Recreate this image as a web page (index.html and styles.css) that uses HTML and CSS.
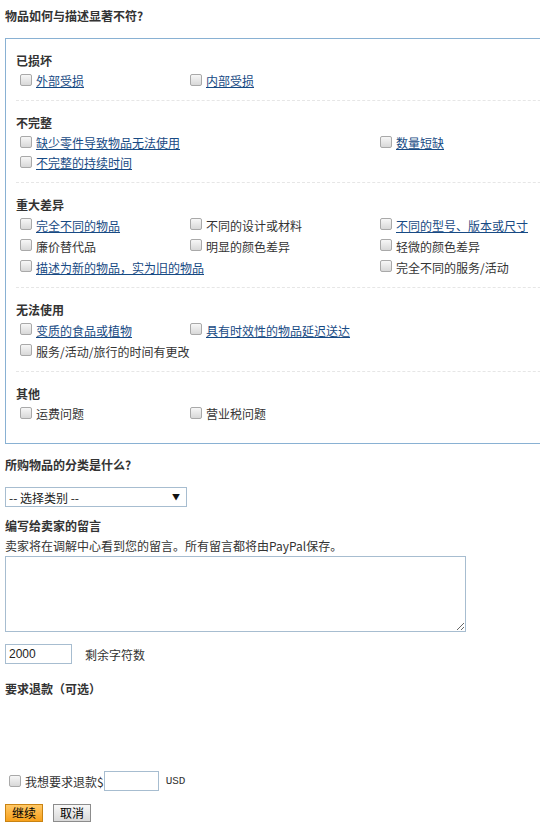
FILE: index.html
```html
<!DOCTYPE html>
<html lang="zh-CN">
<head>
<meta charset="utf-8">
<title>物品如何与描述显著不符</title>
<link rel="stylesheet" href="styles.css">
</head>
<body>
<h2 class="title">物品如何与描述显著不符?</h2>
<div class="box">
  <div class="sec s20">
    <div class="head">已损坏</div>
    <div class="grid">
      <label class="opt"><input type="checkbox"><a href="#">外部受损</a></label>
      <label class="opt"><input type="checkbox"><a href="#">内部受损</a></label>
    </div>
  </div>
  <div class="sec s20">
    <div class="head">不完整</div>
    <div class="grid">
      <label class="opt span2"><input type="checkbox"><a href="#">缺少零件导致物品无法使用</a></label>
      <label class="opt"><input type="checkbox"><a href="#">数量短缺</a></label>
      <label class="opt span2"><input type="checkbox"><a href="#">不完整的持续时间</a></label>
    </div>
  </div>
  <div class="sec">
    <div class="head">重大差异</div>
    <div class="grid">
      <label class="opt"><input type="checkbox"><a href="#">完全不同的物品</a></label>
      <label class="opt"><input type="checkbox"><span>不同的设计或材料</span></label>
      <label class="opt"><input type="checkbox"><a href="#">不同的型号、版本或尺寸</a></label>
      <label class="opt"><input type="checkbox"><span>廉价替代品</span></label>
      <label class="opt"><input type="checkbox"><span>明显的颜色差异</span></label>
      <label class="opt"><input type="checkbox"><span>轻微的颜色差异</span></label>
      <label class="opt span2"><input type="checkbox"><a href="#">描述为新的物品，实为旧的物品</a></label>
      <label class="opt"><input type="checkbox"><span>完全不同的服务/活动</span></label>
    </div>
  </div>
  <div class="sec">
    <div class="head">无法使用</div>
    <div class="grid">
      <label class="opt"><input type="checkbox"><a href="#">变质的食品或植物</a></label>
      <label class="opt"><input type="checkbox"><a href="#">具有时效性的物品延迟送达</a></label>
      <label class="opt span3"><input type="checkbox"><span>服务/活动/旅行的时间有更改</span></label>
    </div>
  </div>
  <div class="sec last s20">
    <div class="head">其他</div>
    <div class="grid">
      <label class="opt"><input type="checkbox"><span>运费问题</span></label>
      <label class="opt"><input type="checkbox"><span>营业税问题</span></label>
    </div>
  </div>
</div>

<h3 class="q cat">所购物品的分类是什么?</h3>
<div class="selectwrap">
  <select class="sel"><option>-- 选择类别 --</option></select>
  <span class="arrow">▼</span>
</div>

<h3 class="q msg">编写给卖家的留言</h3>
<p class="note">卖家将在调解中心看到您的留言。所有留言都将由PayPal保存。</p>
<textarea class="ta"></textarea>
<div class="countrow">
  <input class="count" type="text" value="2000">
  <span>剩余字符数</span>
</div>

<h3 class="q refund">要求退款（可选）</h3>
<div class="refundrow">
  <input type="checkbox" class="cb">
  <span>我想要求退款$</span><input class="amt" type="text"><span class="usd">USD</span>
</div>
<div class="btns">
  <button class="btn primary">继续</button>
  <button class="btn">取消</button>
</div>
</body>
</html>
```
FILE: styles.css
```css
html { overflow-x: hidden; }
body {
  margin: 0;
  padding: 0 5px;
  font-family: "Noto Sans CJK SC", "Liberation Sans", sans-serif;
  font-size: 12px;
  color: #333;
  background: #fff;
}
.title {
  margin: 6px 0 0;
  font-size: 12px;
  line-height: 20px;
  font-weight: bold;
  color: #333;
}
.box {
  margin-top: 12px;
  width: 580px;
  border: 1px solid #89b1d3;
  padding: 0 10px;
}
.sec {
  padding: 12px 0 9px;
  border-bottom: 1px dashed #e6e6e6;
}
.sec.last {
  border-bottom: none;
  padding-bottom: 19px;
}
.head {
  font-weight: bold;
  line-height: 20px;
  color: #333;
}
.grid {
  display: grid;
  grid-template-columns: 170px 190px 1fr;
  padding-left: 4px;
}
.opt {
  display: flex;
  align-items: flex-start;
  line-height: 21px;
  height: 21px;
  white-space: nowrap;
}
.s20 .opt { line-height: 20px; height: 20px; }
.span2 { grid-column: 1 / span 2; }
.span3 { grid-column: 1 / span 3; }
.opt a {
  color: #174a84;
  text-decoration: underline;
}
.opt span { color: #333; }
input[type=checkbox] {
  -webkit-appearance: none;
  appearance: none;
  width: 12px;
  height: 12px;
  margin: 3px 4px 0 0;
  border: 1px solid #a9a9a9;
  border-radius: 2px;
  background: linear-gradient(#f7f7f7, #d8d8d8);
  flex: none;
}
.q {
  margin: 0;
  font-size: 12px;
  font-weight: bold;
  line-height: 20px;
}
.cat { margin-top: 11px; }
.selectwrap {
  position: relative;
  width: 182px;
  margin-top: 12px;
}
.sel {
  -webkit-appearance: none;
  appearance: none;
  display: block;
  width: 182px;
  height: 20px;
  margin: 0;
  padding: 0 0 0 3px;
  border: 1px solid #a7bdd0;
  border-radius: 0;
  background: #fff;
  font-family: "Noto Sans CJK SC", "Liberation Sans", sans-serif;
  font-size: 12px;
  color: #222;
}
.arrow {
  position: absolute;
  right: 7px;
  top: 3px;
  font-size: 8px;
  line-height: 14px;
  color: #111;
}
.msg { margin-top: 9px; }
.note {
  margin: 0;
  line-height: 20px;
}
.ta {
  display: block;
  width: 461px;
  height: 76px;
  margin: 0;
  padding: 2px;
  box-sizing: border-box;
  border: 1px solid #a7bdd0;
  resize: both;
}
.countrow {
  display: flex;
  align-items: center;
  margin-top: 12px;
  gap: 13px;
}
.count {
  width: 67px;
  height: 20px;
  box-sizing: border-box;
  margin: 0;
  padding: 0 3px;
  border: 1px solid #a7bdd0;
  font-family: "Liberation Sans", sans-serif;
  font-size: 12px;
  color: #222;
}
.refund { margin-top: 15px; }
.refundrow {
  display: flex;
  align-items: center;
  margin-top: 72px;
  height: 20px;
  padding-left: 4px;
}
.refundrow .cb { margin: 0 4px 0 0; }
.amt {
  width: 55px;
  height: 20px;
  box-sizing: border-box;
  margin: 0;
  border: 1px solid #a7bdd0;
  padding: 0 2px;
}
.usd {
  margin-left: 7px;
  font-family: "Liberation Mono", monospace;
  font-size: 11px;
}
.btns {
  display: flex;
  gap: 10px;
  margin-top: 13px;
}
.btn {
  width: 38px;
  height: 18px;
  padding: 0;
  margin: 0;
  font-family: "Noto Sans CJK SC", sans-serif;
  font-size: 12px;
  line-height: 16px;
  color: #000;
  border: 1px solid #8c8c8c;
  border-radius: 0;
  background: linear-gradient(#f8f8f8, #d9d9d9);
}
.btn.primary {
  border-color: #c98312;
  background: linear-gradient(#ffc867, #f7a01a);
}
```
